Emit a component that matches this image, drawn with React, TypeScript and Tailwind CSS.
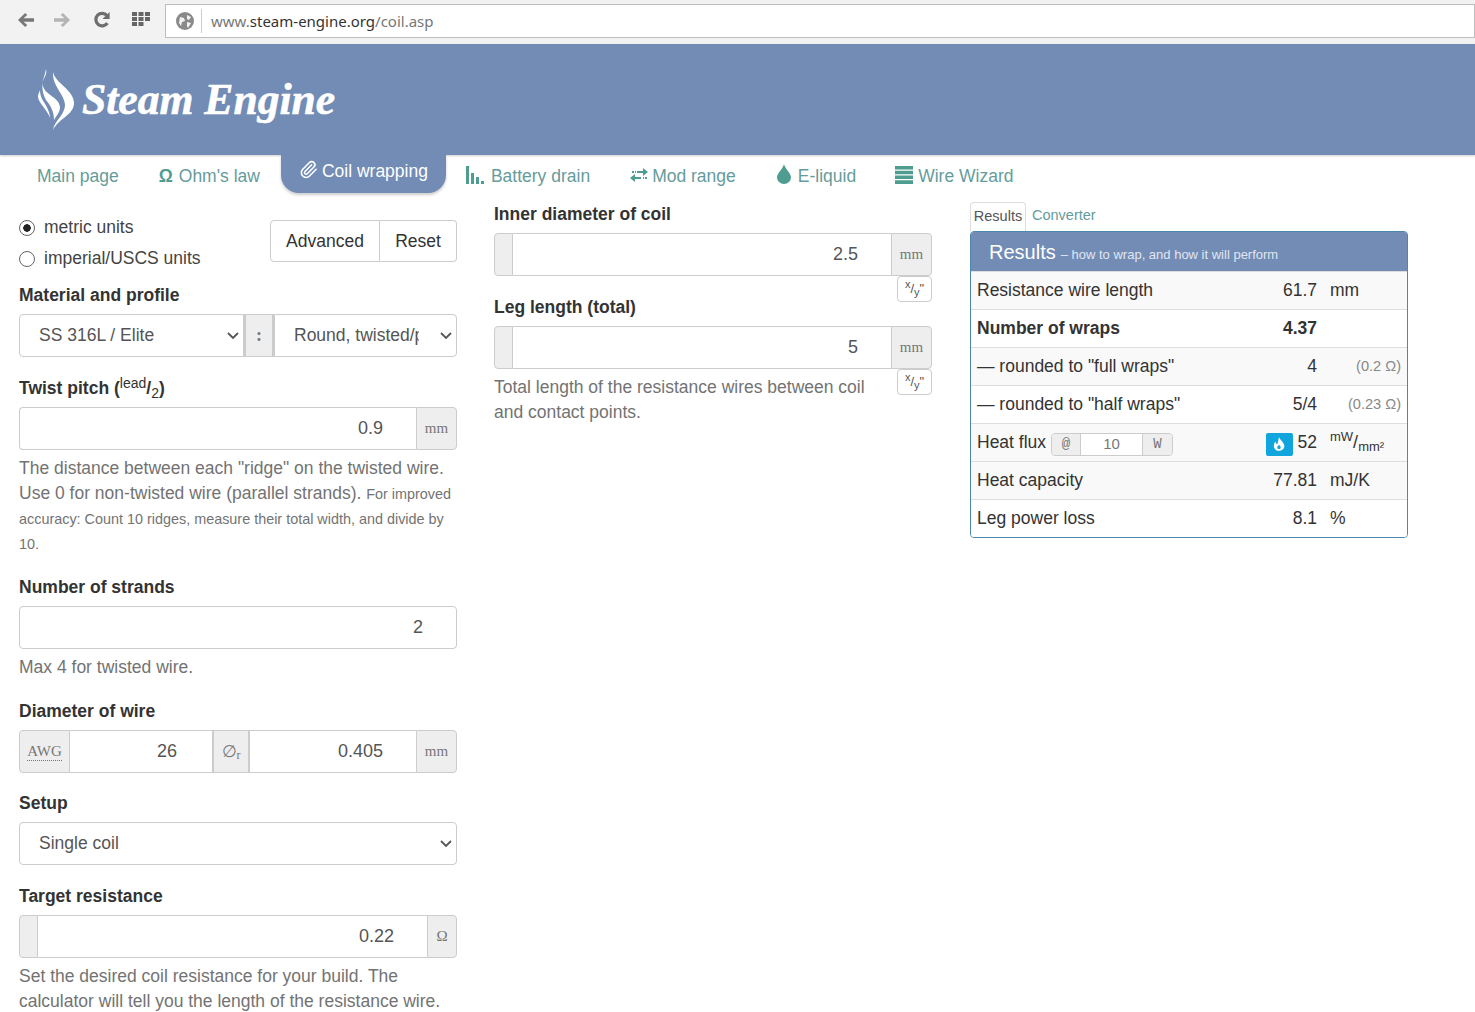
import React from 'react';
import { Paperclip } from 'lucide-react';

const Logo = () => (
    <svg viewBox="0 0 36 62" className="w-[36px] h-[62px] shrink-0" fill="#fff">
        <path d="M15 4C17 15 36 22 36 35C36 47 21 50 15 62C16 53 27 47 27 37C27 27 14 18 15 4Z" />
        <path d="M8 1C10 8 3 11 5 18C7 27 21 29 22 39C22 44 19 47 16 52C16 44 13 38 8 32C5 27 4 21 4.500 16C5 10 7 7 8 1Z" />
        <path d="M2 22C1 25 0 26 0 29C1 36 9 41 12 50C12 43 7 36 4 31C3 28 2 26 2 22Z" />
    </svg>
);

const BrowserBar = () => (
    <div className="h-[44px] bg-[#f2f2f2] flex items-start pt-[4px]">
        <svg viewBox="0 0 20 18" className="w-[18px] h-[16px] ml-[17px] mt-[8px] text-[#777]" fill="currentColor"><path d="M9 1l2.400 2.400L7.200 7H19v4H7.200l4.200 3.600L9 17 1 9z" /></svg>
        <svg viewBox="0 0 20 18" className="w-[18px] h-[16px] ml-[18px] mt-[8px] text-[#b4b4b4]" fill="currentColor"><path d="M11 1L8.600 3.400 12.800 7H1v4h11.800l-4.200 3.600L11 17l8-8z" /></svg>
        <svg viewBox="0 0 20 20" className="w-[18px] h-[18px] ml-[22px] mt-[7px] text-[#6e6e6e]" fill="none" stroke="currentColor" strokeWidth="3.600"><path d="M16 13.500A7 7 0 1 1 15.500 5" /><path d="M18.500 1v8h-8z" fill="currentColor" stroke="none" /></svg>
        <svg viewBox="0 0 18 14" className="w-[18px] h-[14px] ml-[21px] mt-[8px] text-[#666]" fill="currentColor">
            <path d="M0 0h5v4H0zM6.500 0h5v4h-5zM13 0h5v4h-5zM0 5h5v4H0zM6.500 5h5v4h-5zM13 5h5v4h-5zM0 10h5v4H0zM6.500 10h5v4h-5z" />
        </svg>
        <div className="ml-[15px] flex-1 h-[34px] bg-white border border-[#bdbdbd] flex items-center font-['Noto_Sans',sans-serif] text-[15px] leading-[30px]">
            <svg viewBox="0 0 18 18" className="w-[18px] h-[18px] ml-[10px]"><circle cx="9" cy="9" r="9" fill="#8a8a8a" /><path d="M4 5l4 1 1 3-3 1-1 4-2-3zM11 3l4 2-2 3-2-1zM11 10l4 1-3 5-1-2z" fill="#f2f2f2" /></svg>
            <div className="w-px h-[24px] bg-[#ccc] ml-[7px] mr-[9px]"></div>
            <span className="text-[#777]">www.</span><span className="text-[#333]">steam-engine.org</span><span className="text-[#777]">/coil.asp</span>
        </div>
    </div>
);

const navIcon = 'inline-block align-[-2px] text-[#4f9d90]';

const Nav = () => (
    <div className="h-[47px] flex items-start pl-[17px] text-[#659c9b]">
        <a className="px-5 pt-[9px]">Main page</a>
        <a className="px-5 pt-[9px]"><span className="mr-[6px] font-bold text-[#4f9d90]">Ω</span>Ohm's law</a>
        <a className="ml-px h-[38px] w-[165px] pl-[18px] pt-[4px] bg-[#728cb5] text-white rounded-b-[18px] shadow-[0_2px_3px_rgba(0,0,0,0.2)] whitespace-nowrap">
            <Paperclip className="inline-block w-[19px] h-[19px] mr-[4px] align-[-2px]" />Coil wrapping
        </a>
        <a className="px-5 pt-[9px]">
            <svg viewBox="0 0 18 18" className={`${navIcon} w-[18px] h-[18px] mr-[7px]`} fill="currentColor"><path d="M0 0h3v18H0zM5 7h3v11H5zM10 11h3v7h-3zM15 15h3v3h-3z" /></svg>Battery drain
        </a>
        <a className="pl-5 pr-[21px] pt-[9px]">
            <svg viewBox="0 0 18 16" className={`${navIcon} w-[18px] h-[16px] mr-[4px]`} fill="currentColor"><path d="M7 3h6V0l5 4-5 4V5H7zM5 3h1v2H5zM2 3h2v2H2zM11 11H5v3l-5-4 5-4v3h6zM13 9h1v2h-1zM15 9h2v2h-2z" /></svg>Mod range
        </a>
        <a className="px-5 pt-[9px]">
            <svg viewBox="0 0 14 20" className={`${navIcon} w-[14px] h-[20px] mr-[7px]`} fill="currentColor"><path d="M7 0C8 5 14 9 14 13.500A7 6.500 0 0 1 0 13.500C0 9 6 5 7 0Z" /></svg>E-liquid
        </a>
        <a className="pl-[19px] pr-5 pt-[9px]">
            <svg viewBox="0 0 18 18" className={`${navIcon} w-[18px] h-[18px] mr-[5px]`} fill="currentColor"><path d="M0 0h18v3.500H0zM0 4.700h18v3.500H0zM0 9.500h18V13H0zM0 14.300h18V18H0z" /></svg>Wire Wizard
        </a>
    </div>
);

const addon = "bg-[#eee] border border-[#ccc] flex items-center justify-center text-[#777] font-['Liberation_Serif',serif] text-[15px]";

const Addon: React.FC<{ w: string; children?: React.ReactNode; left?: boolean }> = ({ w, children, left }) => (
    <div className={`${addon} ${w} ${left ? 'rounded-l-[4px]' : 'rounded-r-[4px]'} shrink-0`}>{children}</div>
);

const Field: React.FC<{ value: string; className?: string }> = ({ value, className }) => (
    <input readOnly value={value} className={`min-w-0 flex-1 h-[43px] border-y border-[#ccc] bg-white text-right pr-[33px] text-[18px] text-[#555] outline-none ${className || ''}`} />
);

const Label: React.FC<{ children: React.ReactNode }> = ({ children }) => (
    <label className="block font-bold text-[#333] mb-[6px]">{children}</label>
);

const Help: React.FC<{ children: React.ReactNode }> = ({ children }) => (
    <p className="mt-[6px] text-[#737373]">{children}</p>
);

const Select: React.FC<{ text: string; className: string }> = ({ text, className }) => (
    <div className={`relative h-[43px] ${className}`}>
        <select className="w-full h-full appearance-none border border-[#ccc] rounded-[inherit] bg-white pl-[19px] pr-[37px] text-[#555]"><option>{text}</option></select>
        <svg viewBox="0 0 12 7" className="absolute right-[5px] top-[18px] w-[12px] h-[7px] text-[#555]" fill="none" stroke="currentColor" strokeWidth="1.800"><path d="M1 1l5 5 5-5" /></svg>
    </div>
);

const radio = "appearance-none w-[16px] h-[16px] m-0 mr-[9px] rounded-full border-[1.500px] border-[#666] bg-white checked:bg-[radial-gradient(circle,#222_0_3.500px,transparent_4px)]";

const Left = () => (
    <div>
        <div className="flex justify-between h-[68px] mt-[13px]">
            <div>
                <label className="flex items-center h-[25px] mb-[6px] text-[#444]"><input type="radio" name="u" defaultChecked className={radio} />metric units</label>
                <label className="flex items-center h-[25px] text-[#444]"><input type="radio" name="u" className={radio} />imperial/USCS units</label>
            </div>
            <div className="flex h-[42px] mt-[5px] text-[#333]">
                <button className="w-[110px] border border-[#ccc] rounded-l-[4px] bg-white">Advanced</button>
                <button className="w-[77px] border border-l-0 border-[#ccc] rounded-r-[4px] bg-white">Reset</button>
            </div>
        </div>
        <div className="mb-[19px]">
            <Label>Material and profile</Label>
            <div className="flex h-[43px]">
                <Select text="SS 316L / Elite" className="w-[225px] rounded-l-[4px]" />
                <div className={`${addon} w-[30px] border-x-2 font-bold text-[18px]`}>:</div>
                <Select text="Round, twisted/parallel" className="w-[183px] rounded-r-[4px]" />
            </div>
        </div>
        <div className="mb-[19px]">
            <Label>Twist pitch (<sup className="font-normal text-[14px] top-[-6px]">lead</sup>/<sub className="text-[14px] font-normal">2</sub>)</Label>
            <div className="flex">
                <Field value="0.9" className="border-l rounded-l-[4px]" />
                <Addon w="w-[41px]">mm</Addon>
            </div>
            <Help>The distance between each "ridge" on the twisted wire. Use 0 for non-twisted wire (parallel strands). <span className="text-[14.400px] leading-[18px]">For improved accuracy: Count 10 ridges, measure their total width, and divide by 10.</span></Help>
        </div>
        <div className="mb-[19px]">
            <Label>Number of strands</Label>
            <Field value="2" className="w-full border-x rounded-[4px] block" />
            <Help>Max 4 for twisted wire.</Help>
        </div>
        <div className="mb-[18px]">
            <Label>Diameter of wire</Label>
            <div className="flex">
                <Addon w="w-[51px]" left><span className="border-b border-dotted border-[#777] leading-[17px]">AWG</span></Addon>
                <Field value="26" className="w-[142px] flex-none !pr-[35px]" />
                <div className={`${addon} w-[38px] border-x-2`}><span className="text-[17px]">∅</span><sub className="text-[12px]">r</sub></div>
                <Field value="0.405" />
                <Addon w="w-[41px]">mm</Addon>
            </div>
        </div>
        <div className="mb-[19px]">
            <Label>Setup</Label>
            <Select text="Single coil" className="w-full rounded-[4px]" />
        </div>
        <div>
            <Label>Target resistance</Label>
            <div className="flex">
                <Addon w="w-[19px]" left />
                <Field value="0.22" />
                <Addon w="w-[30px]">Ω</Addon>
            </div>
            <Help>Set the desired coil resistance for your build. The calculator will tell you the length of the resistance wire.</Help>
        </div>
    </div>
);

const Fraction = () => (
    <button className="float-right w-[35px] h-[26px] border border-[#ccc] rounded-[4px] bg-white text-[#555] text-[13px] leading-[22px] ml-[8px]">
        <sup className="text-[11px]">x</sup>/<sub className="text-[11px]">y</sub>"
    </button>
);

const Middle = () => (
    <div className="w-[438px]">
        <div className="mb-[19px]">
            <Label>Inner diameter of coil</Label>
            <div className="flex">
                <Addon w="w-[19px]" left />
                <Field value="2.5" />
                <Addon w="w-[41px]">mm</Addon>
            </div>
            <Fraction />
        </div>
        <div>
            <Label>Leg length (total)</Label>
            <div className="flex">
                <Addon w="w-[19px]" left />
                <Field value="5" />
                <Addon w="w-[41px]">mm</Addon>
            </div>
            <Fraction />
            <Help>Total length of the resistance wires between coil and contact points.</Help>
        </div>
    </div>
);

const Row: React.FC<{ label: React.ReactNode; value: React.ReactNode; unit?: React.ReactNode; odd?: boolean; bold?: boolean }> = ({ label, value, unit, odd, bold }) => (
    <div className={`h-[38px] flex items-center border-t border-[#ddd] pl-[6px] ${odd ? 'bg-[#f9f9f9]' : 'bg-white'} ${bold ? 'font-bold' : ''}`}>
        <div className="flex-1 flex items-center whitespace-nowrap">{label}</div>
        <div className="flex items-center">{value}</div>
        <div className="w-[90px] pl-[13px] pr-[6px] flex-none whitespace-nowrap">{unit}</div>
    </div>
);

const Note: React.FC<{ children: React.ReactNode }> = ({ children }) => (
    <div className="text-right text-[14.600px] text-[#888]">{children}</div>
);

const Right = () => (
    <div>
        <div className="flex items-end h-[29px] text-[14.500px]">
            <div className="w-[56px] h-[29px] border border-b-0 border-[#ddd] rounded-t-[4px] text-center leading-[26px] text-[#555]">Results</div>
            <div className="ml-[6px] leading-[26px] self-start text-[#659c9b]">Converter</div>
        </div>
        <div className="border border-[#4d87ad] rounded-[4px] overflow-hidden text-[#333]">
            <div className="h-[40px] bg-[#728cb5] pl-[18px] text-white flex items-center whitespace-nowrap">
                <span className="text-[20px]">Results</span>
                <span className="text-[13px] ml-[5px] mt-[4px] text-[#e0e6f0]">– how to wrap, and how it will perform</span>
            </div>
            <div className="-mt-px">
                <Row odd label="Resistance wire length" value="61.7" unit="mm" />
                <Row bold label="Number of wraps" value="4.37" />
                <Row odd label={'— rounded to "full wraps"'} value="4" unit={<Note>(0.2 Ω)</Note>} />
                <Row label={'— rounded to "half wraps"'} value="5/4" unit={<Note>(0.23 Ω)</Note>} />
                <Row
                    odd
                    label={<>Heat flux
                        <span className="ml-[5px] mt-[3px] flex h-[23px] w-[122px] border border-[#ccc] rounded-[4px] overflow-hidden text-[15px] text-[#777]">
                            <span className="w-[29px] bg-[#eee] border-r border-[#ccc] text-center font-['Liberation_Mono',monospace] text-[14px] leading-[20px]">@</span>
                            <span className="flex-1 bg-white text-center leading-[20px]">10</span>
                            <span className="w-[30px] bg-[#eee] border-l border-[#ccc] text-center font-['Liberation_Mono',monospace] text-[14px] leading-[20px]">W</span>
                        </span></>}
                    value={<>
                        <span className="mt-[3px] w-[27px] h-[23px] bg-[#10a5dd] rounded-[2px] flex items-center justify-center mr-[5px]">
                            <svg viewBox="0 0 14 16" className="w-[12px] h-[14px]" fill="#fff"><path d="M7 0c1 3 5 5 6 9 1 4-2 7-6 7s-6-3-6-6c0-2 1-4 2-5 0 2 1 3 2 3C6 6 6 3 7 0zM7 9c-1 1-2 2-2 3s1 2 2 2 2-1 2-2-1-2-2-3z" fillRule="evenodd" /></svg>
                        </span>52</>}
                    unit={<span className="text-[14px]"><sup className="text-[13px]">mW</sup><span className="text-[18px]">/</span><sub className="text-[13px]">mm²</sub></span>}
                />
                <Row odd label="Heat capacity" value="77.81" unit="mJ/K" />
                <Row label="Leg power loss" value="8.1" unit="%" />
            </div>
        </div>
    </div>
);

export default function App() {
    return (
        <div className="h-screen overflow-hidden bg-white font-['Liberation_Sans',Arial,sans-serif] text-[17.500px] leading-[25px]">
            <BrowserBar />
            <div className="h-[111px] bg-[#728cb5] flex items-start pl-[38px] pt-[24px] shadow-[0_1px_2px_rgba(0,0,0,0.2)]">
                <Logo />
                <span className="ml-[8px] mt-[6px] font-['Liberation_Serif',serif] font-bold italic text-[43.600px] leading-[50px] text-white whitespace-nowrap [-webkit-text-stroke:0.6px_white]">Steam Engine</span>
            </div>
            <Nav />
            <div className="grid grid-cols-[438px_439px_438px] gap-x-[37px] pl-[19px]">
                <Left />
                <Middle />
                <Right />
            </div>
        </div>
    );
}
